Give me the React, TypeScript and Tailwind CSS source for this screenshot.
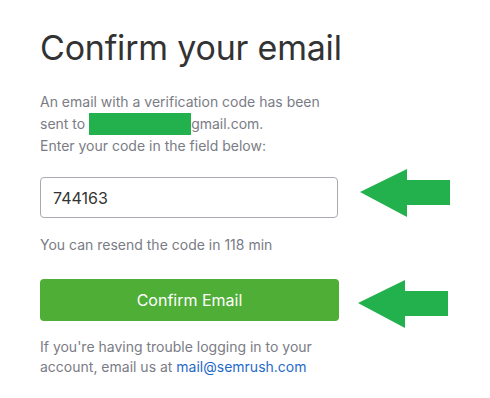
import React, { useState } from 'react';

const Arrow: React.FC<{ className: string }> = ({ className }) => (
  <svg className={className} width="92" height="50" viewBox="0 0 92 50" fill="#22b14c">
    <path d="M1 24 L48 1 L48 12 L91 12 L91 37 L48 37 L48 49 Z" />
  </svg>
);

export default function App() {
  const [code, setCode] = useState('744163');

  return (
    <div className="min-h-[398px] bg-white font-['Inter','Noto_Sans',sans-serif]">
      <div className="relative w-[300px] ml-[40px] pt-[27px]">
        <h1 className="whitespace-nowrap text-[34px] leading-[41px] text-[#333333] tracking-[-0.2px]">Confirm your email</h1>

        <p className="mt-[23px] text-[14px] leading-[22px] text-[#7a7c85]">
          An email with a verification code has been
          <br />
          sent to <span className="inline-block w-[102px] h-[22px] align-top bg-[#22b14c]"></span>gmail.com.
          <br />
          Enter your code in the field below:
        </p>

        <input
          value={code}
          onChange={(e) => setCode(e.target.value)}
          className="mt-[20px] block w-[298px] h-[41px] px-[12px] border border-[#a8abb3] rounded-[4px] text-[16px] text-[#333333] outline-none"
        />

        <p className="mt-[16px] text-[14px] leading-[22px] text-[#7a7c85]">You can resend the code in 118 min</p>

        <button className="mt-[23px] block w-[299px] h-[42px] rounded-[4px] bg-[#4fae35] text-white text-[16px]">
          Confirm Email
        </button>

        <p className="mt-[16px] text-[14px] leading-[20px] text-[#7a7c85]">
          If you're having trouble logging in to your
          <br />
          account, email us at <a href="#" className="text-[#1f6ac8]">mail@semrush.com</a>
        </p>

        <Arrow className="absolute left-[319px] top-[168px]" />
        <Arrow className="absolute left-[317px] top-[279px]" />
      </div>
    </div>
  );
}
